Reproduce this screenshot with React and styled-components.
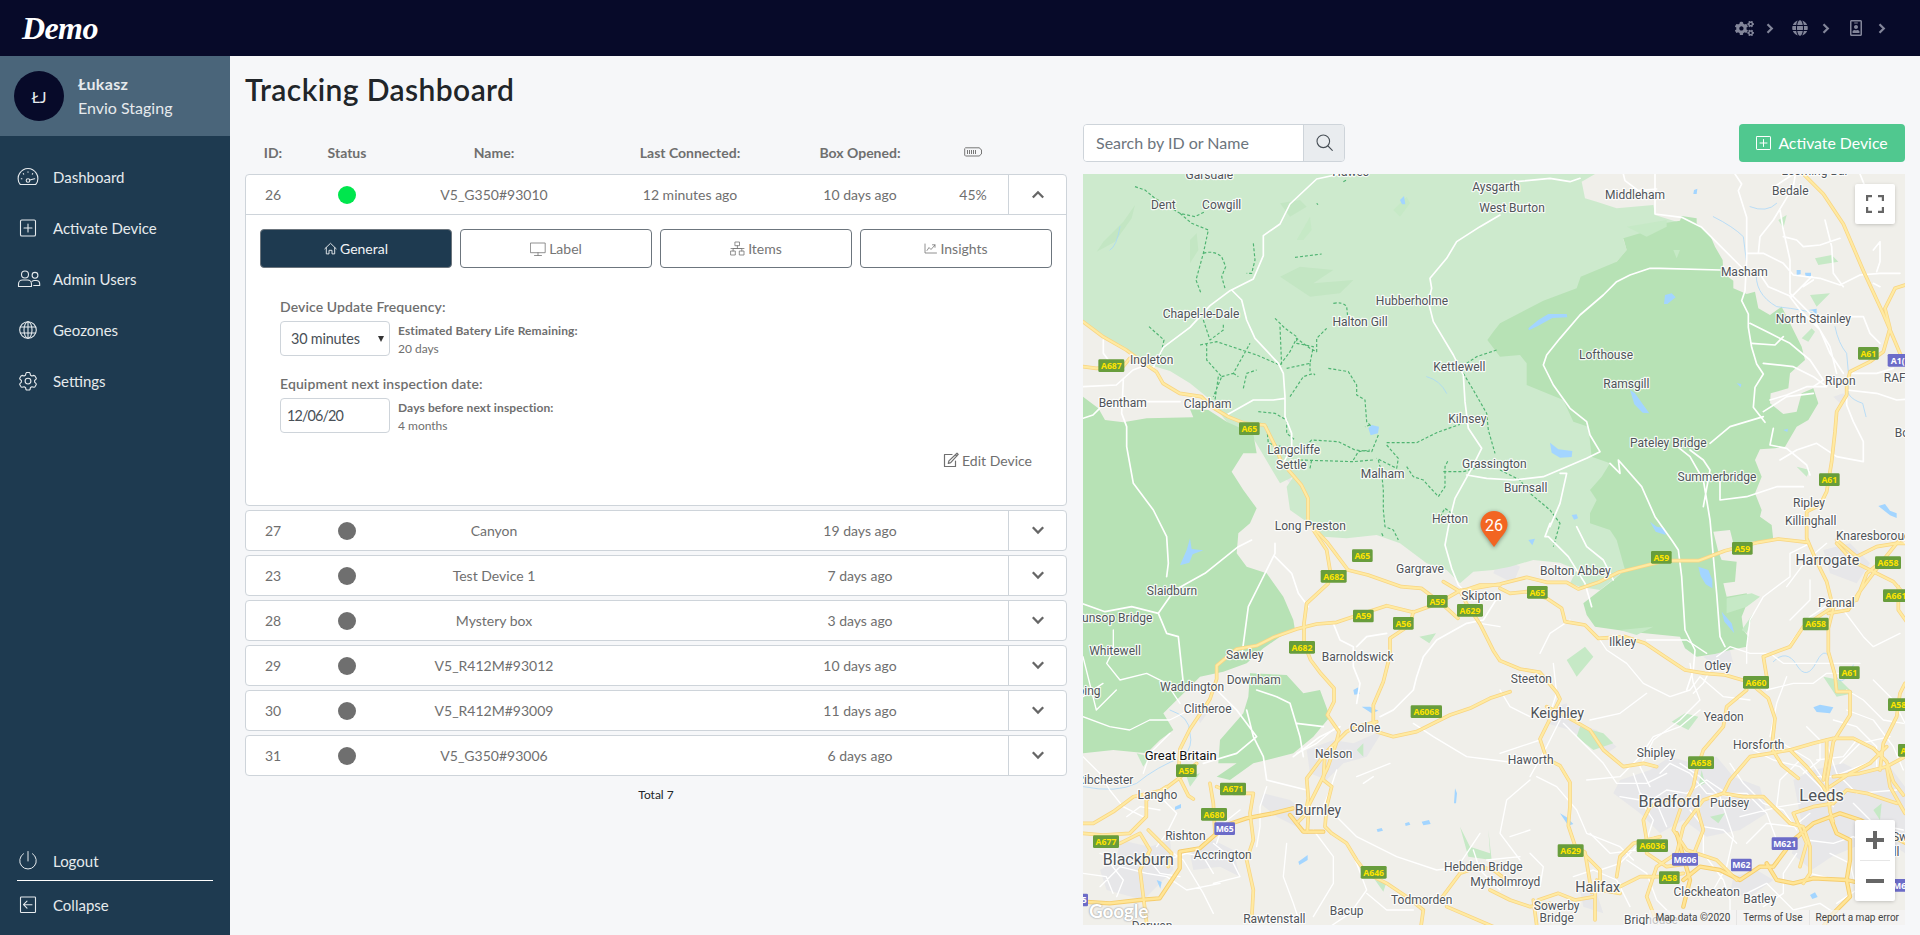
import React from "react";
import styled, { createGlobalStyle, css } from "styled-components";
import { FaCogs, FaGlobe, FaRegIdBadge } from "react-icons/fa";

const GlobalStyle = createGlobalStyle`
  *, *::before, *::after { box-sizing: border-box; }
  html, body { margin: 0; height: 100%; overflow: hidden; }
  body { font-family: Lato, "Open Sans", "Liberation Sans", sans-serif; font-size: 14px; color: #6f6f6f; background: #f6f7f9; }
  button, input, select { font-family: inherit; }
`;

const Page = styled.div`
  display: flex;
  flex-direction: column;
  width: 100%;
  height: 100vh;
`;

const TopBar = styled.header`
  display: flex;
  align-items: center;
  justify-content: space-between;
  height: 56px;
  flex: none;
  padding: 0 34px 0 22px;
  background: #070a29;
`;

const Logo = styled.div`
  font: italic 700 32px/34px "Liberation Serif", serif;
  color: #fff;
  letter-spacing: -0.6px;
`;

const TopIcons = styled.div`
  display: flex;
  align-items: center;
  color: #83869a;
  svg { display: block; }
`;

const TopIcon = styled.span`
  display: flex;
  justify-content: center;
  width: ${(p) => p.$w}px;
  margin-right: ${(p) => p.$gap}px;
`;

const Body = styled.div`
  display: flex;
  flex: 1;
  min-height: 0;
`;

const Sidebar = styled.aside`
  display: flex;
  flex-direction: column;
  width: 230px;
  flex: none;
  background: #1e3a50;
  color: #e6eaed;
`;

const UserCard = styled.div`
  display: flex;
  align-items: center;
  gap: 14px;
  height: 80px;
  padding: 0 14px;
  background: #4a657a;
`;

const Avatar = styled.div`
  display: flex;
  align-items: center;
  justify-content: center;
  width: 50px;
  height: 50px;
  border-radius: 50%;
  background: #070a29;
  font-size: 16px;
`;

const UserText = styled.div`
  font-size: 16px;
  line-height: 24px;
  strong { display: block; font-weight: 700; letter-spacing: 0.3px; }
`;

const Menu = styled.nav`
  display: flex;
  flex-direction: column;
  padding-top: 15px;
  flex: 1;
`;

const MenuItem = styled.a`
  display: flex;
  align-items: center;
  height: ${(p) => p.$h || 51}px;
  padding-left: 16px;
  font-size: 15px;
  svg { width: 24px; height: 24px; margin-right: 13px; flex: none; }
`;

const Divider = styled.hr`
  height: 1px;
  margin: 0 17px;
  border: 0;
  background: #fff;
`;

const SidebarFoot = styled.div`
  padding-bottom: 6px;
`;

const Main = styled.main`
  display: flex;
  flex-direction: column;
  flex: 1;
  padding: 0 15px 10px;
  min-width: 0;
`;

const Title = styled.h1`
  height: 68px;
  margin: 0;
  padding-top: 14px;
  font-size: 30px;
  line-height: 38px;
  font-weight: 600;
  letter-spacing: 0.4px;
  color: #212529;
`;

const Columns = styled.div`
  display: flex;
  gap: 16px;
  flex: 1;
  min-height: 0;
`;

const ListPane = styled.section`
  display: flex;
  flex-direction: column;
  width: 822px;
`;

const rowGrid = css`
  display: grid;
  grid-template-columns: 54px 94px 200px 192px 148px 74px 1fr;
  align-items: center;
  justify-items: center;
`;

const HeadRow = styled.div`
  ${rowGrid}
  height: 50px;
  padding: 6px 1px 0;
  font-weight: 700;
`;

const Card = styled.article`
  height: ${(p) => (p.$open ? 332 : 41)}px;
  margin-bottom: 4px;
  border: 1px solid #ced4da;
  border-radius: 4px;
  background: #fff;
`;

const Row = styled.div`
  ${rowGrid}
  height: ${(p) => (p.$open ? 40 : 39)}px;
  border-bottom: ${(p) => (p.$open ? "1px solid #ced4da" : "0")};
`;

const Battery = styled.span`
  display: flex;
  padding-left: 4px;
`;

const Dot = styled.span`
  width: 18px;
  height: 18px;
  border-radius: 50%;
  background: ${(p) => (p.$on ? "#00e64d" : "#6f6f6f")};
`;

const Toggle = styled.span`
  display: flex;
  align-items: center;
  justify-content: center;
  align-self: stretch;
  justify-self: stretch;
  border-left: 1px solid #ced4da;
`;

const Tabs = styled.div`
  display: grid;
  grid-template-columns: repeat(4, 192px);
  gap: 8px;
  padding: 14px 0 0 14px;
`;

const Tab = styled.button`
  display: flex;
  align-items: center;
  justify-content: center;
  gap: 3px;
  height: 39px;
  padding: 0;
  border: 1px solid #6c757d;
  border-radius: 4px;
  font-size: 14px;
  background: ${(p) => (p.$active ? "#1e3a50" : "#fff")};
  color: ${(p) => (p.$active ? "#f1f3f5" : "#757575")};
`;

const Form = styled.div`
  display: flex;
  flex-direction: column;
  padding: 27px 34px 0;
`;

const Field = styled.div`
  height: 77px;
`;

const FieldLabel = styled.div`
  height: 26px;
  line-height: 23px;
  font-weight: 600;
  letter-spacing: 0.1px;
`;

const FieldLine = styled.div`
  display: flex;
  gap: 8px;
`;

const Control = styled.div`
  display: flex;
  align-items: center;
  justify-content: space-between;
  width: 110px;
  height: 35px;
  padding: 0 5px 0 ${(p) => p.$pl}px;
  border: 1px solid #ced4da;
  border-radius: 4px;
  color: #495057;
  font-size: 14.4px;
  letter-spacing: ${(p) => p.$track || "-0.2px"};
`;

const Hint = styled.div`
  padding-top: 1px;
  font-size: 12px;
  line-height: 18px;
  strong { display: block; letter-spacing: 0.12px; }
`;

const EditLink = styled.a`
  display: flex;
  align-items: center;
  align-self: flex-end;
  gap: 3px;
  height: 20px;
  margin-top: 1px;
`;

const Total = styled.div`
  margin-top: 7px;
  text-align: center;
  font-size: 12px;
  line-height: 15px;
  color: #212529;
`;

const MapPane = styled.section`
  display: flex;
  flex-direction: column;
  width: 822px;
`;

const Tools = styled.div`
  display: flex;
  justify-content: space-between;
  height: 50px;
`;

const Search = styled.div`
  display: flex;
  width: 262px;
  height: 38px;
  border: 1px solid #ced4da;
  border-radius: 4px;
  overflow: hidden;
`;

const SearchInput = styled.input`
  flex: 1;
  min-width: 0;
  padding: 0 12px 2px;
  border: 0;
  font-size: 16px;
  &::placeholder { color: #6c757d; opacity: 1; }
`;

const SearchButton = styled.span`
  display: flex;
  align-items: center;
  justify-content: center;
  width: 41px;
  padding-bottom: 2px;
  border-left: 1px solid #ced4da;
  background: #e9ecef;
`;

const ActivateButton = styled.button`
  display: flex;
  align-items: center;
  justify-content: center;
  gap: 6px;
  width: 166px;
  height: 38px;
  padding: 0 2px 1px 0;
  border: 0;
  border-radius: 4px;
  background: #50c88f;
  color: #fff;
  font-size: 15.8px;
`;

const MapFrame = styled.div`
  position: relative;
  height: 751px;
  overflow: hidden;
  background: #f0efea;
  > svg { display: block; width: 822px; height: 751px; }
`;

const MapButton = styled.div`
  position: absolute;
  right: 10px;
  top: ${(p) => p.$top}px;
  display: flex;
  flex-direction: column;
  align-items: center;
  width: 40px;
  border-radius: 2px;
  background: #fff;
  box-shadow: 0 1px 4px -1px rgba(0, 0, 0, 0.3);
`;

const MapButtonCell = styled.span`
  display: flex;
  align-items: center;
  justify-content: center;
  width: 40px;
  height: 40px;
`;

const ZoomRule = styled.span`
  width: 30px;
  height: 1px;
  background: #e6e6e6;
`;

const Pin = styled.div`
  position: absolute;
  left: 397px;
  top: 337px;
  width: 28px;
  height: 37px;
  text-align: center;
  font: 16px/29px Roboto, sans-serif;
  color: #fff;
  svg { position: absolute; left: 0; top: 0; filter: drop-shadow(0 1px 2px rgba(0, 0, 0, 0.4)); }
  span { position: relative; }
`;

const GoogleMark = styled.div`
  position: absolute;
  left: 6px;
  bottom: 2px;
  font: 700 19px/24px Lato, sans-serif;
  letter-spacing: -0.2px;
  color: #fff;
  text-shadow: 0 0 2px #999, 0 0 1px #aaa;
`;

const Credits = styled.div`
  position: absolute;
  right: 0;
  bottom: 0;
  display: flex;
  height: 15px;
  font: 10px/15px Roboto, sans-serif;
  color: #444;
  background: rgba(245, 245, 245, 0.7);
  span { padding: 0 6px; white-space: nowrap; }
  span + span { border-left: 1px solid rgba(220, 220, 220, 0.6); }
`;

/* ---------- line icons ---------- */
const Line = ({ size = 24, w = 1.1, children, box = 24, ...rest }) => (
  <svg width={size} height={size} viewBox={`0 0 ${box} ${box}`} fill="none" stroke="currentColor" strokeWidth={w} strokeLinecap="round" strokeLinejoin="round" {...rest}>
    {children}
  </svg>
);

const GaugeIcon = () => (
  <Line>
    <path d="M4.3 19.5C1.2 16.5 1.8 11 3.6 8.400C5.500 5.500 8.500 3.500 12 3.500s6.500 2 8.400 4.900c1.800 2.600 2.400 8.100-.7 11.100z" />
    <circle cx="12" cy="15.500" r="1.800" />
    <path d="M13.800 15l4.700-1.300M12 6.700v.6M7.300 8.700l.4.400M16.700 8.700l-.4.400M5.300 13.700h.6M18.400 13.700h.3" />
  </Line>
);
const PlusBoxIcon = ({ size }) => (
  <Line size={size}>
    <rect x="4.500" y="4" width="15" height="16" rx="1.300" />
    <path d="M12 8v8M8 12h8" />
  </Line>
);
const ButtonPlusIcon = () => (
  <Line size={18} box={18} w={1}>
    <rect x="2.500" y="2.500" width="14" height="13" rx=".6" />
    <path d="M9.500 5.500v7M6 9h7" />
  </Line>
);
const UsersIcon = () => (
  <Line style={{ overflow: "visible" }}>
    <circle cx="9" cy="7.500" r="3.500" />
    <path d="M2.500 19.500v-2.500c0-2.300 1.800-4 4-4h5c2.200 0 4 1.700 4 4v2.500z" />
    <circle cx="19" cy="8.300" r="2.900" />
    <path d="M16 14.300c.6-.5 1.300-.8 2.200-.8h2c2 0 3.500 1.500 3.500 3.500v1.500h-6" />
  </Line>
);
const GlobeIcon = () => (
  <Line>
    <circle cx="12" cy="12" r="8.300" />
    <ellipse cx="12" cy="12" rx="4" ry="8.300" />
    <path d="M12 3.700v16.600M4.500 9h15M4.500 15h15" />
  </Line>
);
const GearIcon = () => (
  <Line>
    <path d="M10 4.200l.5-.7h3l.5.700.5 2 1.400.8 2-.6.900.3 1.500 2.600-.2.900-1.500 1.300v1.700l1.500 1.400.2.900-1.500 2.500-.9.300-2-.6-1.400.8-.5 2-.5.500h-3l-.5-.500-.5-2-1.400-.8-2 .6-.9-.3-1.500-2.500.2-.9 1.500-1.400v-1.700L3.900 10.200l-.2-.9 1.500-2.600.9-.3 2 .6 1.400-.8z" />
    <circle cx="12" cy="12.100" r="2.900" />
  </Line>
);
const PowerIcon = () => (
  <Line w={1}>
    <path d="M12 2.500v9.500M7.500 4.700a8.300 8.300 0 1 0 9 0" />
  </Line>
);
const CollapseIcon = () => (
  <Line>
    <rect x="4.500" y="4" width="15" height="15.500" rx=".8" />
    <path d="M16 11.700H8M11 8.200l-3.500 3.500L11 15.200" />
  </Line>
);
const HomeIcon = () => (
  <Line size={13} box={13} w={0.9}>
    <path d="M.8 6.800L6.500 1.300l5.700 5.500M2.300 5.700v6.200h2.700V8.300h3v3.600h2.700V5.700" />
  </Line>
);
const ScreenIcon = () => (
  <Line size={16} box={16} w={0.8}>
    <path d="M.8 2h14.400v9.700H.8zM8 11.700v2.800M4.500 14.500h7" />
  </Line>
);
const SitemapIcon = () => (
  <Line size={15} box={15} w={0.8}>
    <path d="M5.300 1h4.200v3.700H5.300zM1 10h4.300v4H1zM9.700 10H14v4H9.700zM7.400 4.700v2.800M3.100 10V7.500h8.700V10M1 7.500h13" />
  </Line>
);
const ChartIcon = () => (
  <Line size={13} box={13} w={0.8}>
    <path d="M1 2v9h11.500M3 8.500l2-3 2 2 4-4.500M8.500 2.800H11v2.500" />
  </Line>
);
const EditIcon = () => (
  <Line size={16} box={16} w={1.200}>
    <path d="M9 2.500H1.500v12h11V9M14 1.200l1.200 1.200-7.500 8.200-2.400.9.600-2.600zM12.500 2.800l1.300 1.300" />
  </Line>
);
const BatteryIcon = () => (
  <svg width="18" height="10" viewBox="0 0 18 10" fill="none" stroke="#777" strokeWidth="1">
    <path d="M1.500.800h14l1 1.500 1 .5v4.200l-1 .5-1 1.500h-14l-.8-.8V1.600z" />
    <path d="M3.500 3v4M5.500 3v4M7.500 3v4M9.500 3v4M11.500 3v4" />
  </svg>
);
const SearchIcon = () => (
  <Line size={17} box={17} w={1.100} color="#495057">
    <circle cx="7.300" cy="7.300" r="6.300" />
    <path d="M12 12l4.300 4.300" />
  </Line>
);
const ToggleChevron = ({ up }) => (
  <svg width="14" height="9" viewBox="0 0 14 9" fill="none" stroke="#666" strokeWidth="2.300">
    <path d={up ? "M1.800 7.500L7 2.300l5.200 5.200" : "M1.800 1.300L7 6.500l5.200-5.200"} />
  </svg>
);
const TopChevron = () => (
  <svg width="8" height="11" viewBox="0 0 8 11" fill="none" stroke="currentColor" strokeWidth="2.200">
    <path d="M1.500 1.200L5.800 5.500 1.500 9.800" />
  </svg>
);

/* ---------- map data, three units per pixel ---------- */
const PARK =
  "M9 192H1545L1505 215 1515 265 1550 275 1610 295 1720 285 1725 315 1790 335 1750 345 1680 372 1630 388 1640 420 1610 455 1520 560 1700 900 1700 1240 1630 1300 1635 1380 1560 1440 1500 1430 1470 1420 1490 1380 1440 1358 1360 1350 1290 1370 1240 1380 1180 1385 1140 1420 1100 1380 1040 1360 960 1300 890 1275 800 1285 730 1280 680 1235 630 1200 620 1130 640 1100 600 1120 520 985 440 935 380 860 330 820 270 783 210 765 150 725 75 680 9 635Z";
const DARK = [
  "M1260 640L1390 572 1490 535 1502 500 1610 455 1640 420 1630 385 1680 370 1750 340 1800 332 1805 318 1850 325 1850 340 1890 375 1905 410 1928 450 1930 490 1960 512 1960 535 2000 552 2025 545 2035 595 2070 615 2105 590 2130 640 2155 690 2165 710 2175 750 2130 790 2125 835 2072 850 2070 880 2110 912 2150 905 2165 850 2200 835 2215 880 2185 930 2150 950 2115 1010 2085 1015 2040 1018 2025 1050 2045 1100 2025 1150 2045 1200 2040 1220 2075 1245 2080 1290 1960 1300 1950 1260 1900 1265 1915 1325 1925 1350 1970 1355 1965 1415 1930 1420 1940 1460 2000 1450 2005 1470 1985 1520 1990 1560 2005 1580 2000 1610 1950 1620 1905 1632 1850 1640 1815 1615 1800 1580 1650 1565 1545 1550 1520 1515 1510 1480 1600 1410 1635 1380 1610 1290 1590 1260 1530 1240 1530 1210 1550 1170 1530 1140 1565 1100 1590 1060 1535 1040 1525 950 1480 935 1450 870 1340 825 1340 760 1320 735 1260 740 1222 690 1240 665Z",
  "M9 860L55 895 75 930 130 937 200 925 340 922 330 898 385 900 440 935 520 972 530 1030 490 1030 455 1085 490 1140 530 1195 510 1240 475 1270 470 1330 500 1370 560 1390 610 1460 640 1530 645 1560 600 1580 550 1615 500 1660 430 1685 360 1700 300 1760 250 1810 280 1860 240 1890 200 1930 100 1920 9 1930Z",
  "M510 1690L620 1695 670 1750 720 1740 750 1820 700 1880 640 1930 520 1960 450 2010 410 2000 470 1960 415 1960 420 1890 490 1810 505 1760Z",
];
const PATCHES =
  "M2190 555l60-5-40 40zM2205 445l50-10 20 20-60 10zM2165 685l30-30 10 10-20 30zM940 300l40-40 10 20-30 40zM650 390l40-70 5 40-25 30zM1780 420l20 0-10 25zM1460 1650l55-40 25 30-50 60zM1940 1465l75-15 25 10-40 30-60 20zM1018 1580l50-10-20 30zM1500 1850l70 20 30 30-60 20-50-40zM1775 1835l40-25 40 10-30 40zM830 1920l20-20 0 40zM2020 1510l-20 60-15-10zM1620 1560l100-10-50 25zM1865 1980l10 40-20 10zM1140 2150l30 60 60 20-5-70 10 90-70-10zM885 2310l35 5-10 30zM1890 2120l45-10-20 30zM2380 2100l25-20-5 50zM2230 1700l50 10 40 40-50 10zM1640 350l120-20 0 20-60 30zM2095 330l25-15-10 40zM1680 360l40-20 40 10-50 20zM170 1930l40 10-20 30zM320 2000l40-10-30 40zM2150 1070l40 10-10 20z";
const WOODS = "M70 395l60-60 35-50-10 40-50 70-55 30zM330 390l20-20 5 50-25 40zM600 500l60-30 100 10-60 40 120-10-40 40-90 10zM600 280l60-10 20 20-50 30z";
const URBAN =
  "M2140 2010l60-30 90-20 60 30 80-20 45 60v200l-60-40-90 20-70 30-60 40-60-50 30-90zM1620 2010l90-30 60-40 70 20 70-20 50 60 80 30 20 80-80 50-100 20-70-50-70 40-60-60-80-60zM1400 1800l60-20 20 60 70 20 60 50-30 20-110-70-70-20zM550 2050l80 20 50 40-30 40-60-30-50-40zM680 1920l80-30 60 10 90-40-50 80-70 20-50 50-50-20zM120 2190l90 20 60-20 10 90-90 90-110-30-20-60 50-30zM330 2230l70-40 60 30 20 80-60-30-80 10zM2230 1320l80-20 60 60-40 60-80-30zM1260 1340l60 30-20 50-60-30zM600 1000l40 60-10 60-40-40zM1500 2340l50 10 20 60-60-20zM1870 1640l80-20 10 40-50 10zM2260 860l30-10 10 15-20 15zM340 1790l50 10-30 40zM1960 2300l70-20 50 30-70 50-60-10z";
const WATER =
  "M865 955l10-10 22 5-3 20-22 6zM960 270l12-12 4 25-10 0zM1410 998l25 20 42 5-2 18-35 2-25-15zM1650 840l15 10 25 35 18 25-20-2-25-25zM1345 655l30-25 30-18 55 0 2 10-45 2-45 25-25 12zM1755 555l20-5 12 12-25 20-10 0zM320 1320l10-35 5 32 35 4-32 12-10 25-28 8zM1855 1370l30 10 12 30 0 25-20-12-15-25zM1710 1235l20 15 25 5 2 20-30-10zM1925 1505l30 35 8 30-30-35zM2200 1792l20-8 40 8-10 18-40-4zM845 1790l25 0 25 12-20 8zM820 1740l15-8 4 20-16 2zM655 2255l28-20 0 15-25 15zM975 2140l12-4 4 8-14 4zM1025 2135l22-5 5 12-22 4zM890 2158l15-4 4 8-16 4zM1125 2035l6 15-3 30-6 0zM1440 2110l20 12 20 20-15 5zM2395 1188l20-6 15 20 20 8 0 14-20-8zM2185 600l25-4 0 18-12-12zM2150 480l12 0 0 12-12 4zM2175 488l18 0 0 12-16 0zM1842 240l10-4-2 16-10 0zM1345 1290l20-4-8 20zM2190 2355l15-8 8 14-16 6zM230 2310l15 6-4 20zM285 2090l18-8 0 12-18 6zM1475 1215l15-2 4 12-12 4zM1970 820l14 2-2 10zM2110 960l14-4-2 10z";
const STREAMS =
  "M1040 800q40 10 60 50M2030 480q-10 70 60 110 90 10 110 20M2265 650q10 50 35 80l8 90q-20 40 40 60l10 40M2080 1655q40-40 70 10t60-10 50 20 60-10M1900 320q60 30 90 60l10 80M270 1800q60 20 60 70 10 40-20 70-80 30-140 80-60 30-160 10M2090 280q-30 30-80 10M120 350q-10 60-30 70";
const TRAILS = [
  "M165 230l30 10 30 25 75 45 45 10 30-15M300 310l35 30 50 20-15 70-22 80 15 40M370 430q30-10 55 10l12 30-12 30 10 35M520 400l5 50-10 40-15 0M645 442l80-10M790 215l10-5M710 280l4 4",
  "M207 650l45 40-10 45-18 30M370 630l20 60 40-30 0-20M360 705l50-10 120 40 70 30 30-40 20-40 40 30 20 10 0-40 30-30M380 700l0 50 45 50-25 60M425 800l35-10 50-90M460 790l15 10M490 835l10-45 30-10M585 625l30 30 35 25 0 20 50 10-10 50-70 15M600 650l5 120M630 860l40-60 30-10 5 5M690 760l0 30M415 800l-10 70",
  "M760 580q30-5 40 10l3 30M745 775l30 5 30 5 25 40 0 30 25 15 5 65 15 15M920 998l90 0 60-30 70-25M870 945l-15 5M895 975l-20 50-50-5-50-25-80-5-20 20M660 1050l160 5 60-5M820 1050l15-25 35-5M895 1050l10 40 5 50 0 60 5 50 25 10 15 30M920 1005l35 40-5 30-60-30M980 1070l20 30 30 10 45 50 20-30 0-60 10-20M1090 1085l60 0 70-20M1150 790l30 50 40 70 5 50 20 70M1160 760l30-20 60-20M535 905l50 5 35 20 0 40 25 20M540 940l20 10 5 50 40 10M690 1075l5-25",
  "M1260 1080l60 30 30 40 60 50 30 40-20 70M1080 1220l15-25 20 15M905 1270l5 10",
];
const MINOR = [
  "M780 192l-70 15-80 75-30 60-50 35 0 60-30 70-70 35-60 45-60 65-80 60-30 60-20 0",
  "M455 540l30 30 15 60 25 55 70 75 15 30 5 70 0 60 20 50 0 40-20 40-20 20M440 915l80-45 60 0 35-5M9 830l100-5 50-45 40-15M130 810l-5 100 15 40 0 60 20 110 60 80 40 80 5 80-5 40",
  "M280 1445l-45 65 25 60 35 10 15 140M235 1510l-80-20-80 15-70-25M285 1440l90-50 100-80 40-20M585 1300l0 30-40 80-40 80-20 150M585 1340l50 50 20 60 30 40M300 875l-100 0M70 690l0 40 15 20M9 925l30-10 20-20",
  "M1260 315l-60 35-70 45-30 50-50 60 5 30-10 40 15 60 60 100 30 60 5 80 10 80 40 60-30 60-50 90-15 60-15 80 20 70 20 50 20 20",
  "M1500 205l-30 10-60-10-100 10M1630 192l5 20 40 30 55-5M2340 192l20 50M1725 192l0 60 0 60 80 10 60 30 60 60 80 80M1965 192l20 30-10 20 25 80 0 130-5 90-10 30 20 40 0 40 10 60 15 50 20 30-25 40-5 60 35 45M2000 430l50 0 60 30 30 35 80 10 60 20 60-30 60-5 60 0M2035 430l5-50 40-50 30-50 30-50 10-60M2100 300l10 60 20 90 0 100 60 60 60 100 20 80M2110 380l40 10 20 20 50-5 60-20M2140 192l-60 40M2290 530l-30-40-5-80-20-80M2170 530l30-20M2045 500l20 30 70 30 60-60M2130 560l30 40 60 60 30 70 40 60M2010 640l60 30 60 30 60 50 40 60-30 20",
  "M2015 700l70 5 25-25M2050 760l90 10 60 30 40 30-60 0-60 25-50 15M2050 905l70-45 80-10M2080 955l-10 50 50 10 60 50 10 30M2100 1050l50-30 60-20 60 40 80 15 0-60-30-60-20-50 0-60M2300 840l90 10 60 20 60-5M2310 790l80 0 50-15M2310 620l40 0 20 50 30 30M2380 520l20 10M2380 420l20-25 0 60-10 30",
  "M1740 475l-30 0-60 20-40 20-40 40-70 60-60 70-40 50-10 30 30 60 50 70 50 40 10 40 30 50-40 20-70 30-60 25-90 10-80-5-60-10M1740 475l180 5M1590 1060l30 30-5-40 70 80 40 90 50 70 20 30 10 80 10 160 30 60-5 60-20 60M1780 1000l50 40 40 70 10 60 10 60 10 110 10 110 10 130 15 30M1890 1000l60-50 100-30M1830 1020l40 30 20 30-20 110M1920 1100l0 70 80-10 90-30 80 0",
  "M1490 1250l30 60 50 40 30 60M1410 1240l-15 40 10 0 60 60 50 80 20 70M1440 1090l20 0-20 90-30 70M1260 1450l-50 80-50 10-90 50-40 50-20 60-10 40-60 60-40 20M760 1540l20 50 40 20 0 60 20 50-10 60M830 1610l30-30 60-10M500 1800l20 80 30 60 10 70 120 30M640 1940l80-60 60-30M530 1740l60 20 40 20 30 100 10 60M650 1840l80 10M410 1740l60 60 60 80-60 50-100 30",
  "M1000 1840l60 40 100 60 80 10 80 10M1260 1550l-60-10M9 1820l80 30 60 10 60-30 60 0 60-30M100 1560l0 60-20 40 40 50 80-20 60 30 40 60M9 1640l40 160 60-60M9 1760l60-40M9 1940l50 50 30 50 40 50 60 30M190 1990l20-60 60-60M880 2000l-30 20M930 1960l-100 40M770 1980l-20 60-20 50M650 1930l60-30 60-50M480 2100l-50 40-20 60M700 2160l60 80 0 80-60 100M620 2200l-10 100 30 80 20 60M560 2030l-20 60 0 60-10 60M770 2120l60 60 120 60 120 40 80-10 60-10M800 2200l30 60 30 80-50 70-60 40M250 2210l60 40 60 100 30 60M260 2250l60-20 50 10 30 50M60 2330l60-60 80 20 60 10 60 40 100-20M60 2230l60 20 60-10M9 2290l70 10 20 50M400 2200l50 40 30 60-80 20M230 2050l60 60-30 60-30 40",
  "M1180 2220l20 60 60 60M1200 2170l-60 90M1220 2250l100-10M860 2350l60 50 80 0M1260 1740l30 50 60 30M1260 1930l60-20 60-20M1450 1840l60 60 60 60 40 60 90 0 60-30M1370 2000l60 30 60 70 30 70 100 40 40 40M1350 2010l-70 60-20 100 60 80M1440 1830l-40 80-50 90M1520 2010l100-10 60-60 40-60 80-30 60-50M1420 1660l10 90-20 60M1380 1630l30-60 60-40",
  "M1560 1590l20 30 60 40 50 60 80 40 60-20 30-40 70 60 80 10M1700 1750l-80 60-90 20M1830 1660l10 60 20 50-60 60-80 60-40 80 30 60M1900 1660l-30 60-30 30M1700 1590l120 0 60 40M1910 1640l40-30 60 20 60 0 40 30 120 0 110 0M2000 1660l0-50 10-80 40-70 80-60 0-70 60-30M2130 1600l60-80 60-40 40 20 60 80 30 30 80-40M2190 1410l0 60-60 60M2240 1300l-60 50-60 80M2060 1740l80-20 60 0 40-30 60 0M2120 1700l-30 80-20 100M2300 1740l50 30 60 60 60 10",
  "M1700 2080l60-40 60 10 60-40 60 40 60 0 60 60 30 80M1800 1960l60 40 60 60 40 120-20 90-40 70M1950 1960l40 60 60 60 60 20 40 60M2020 1920l60 30 80 20 60 60 40 60M2090 1890l100 60 60 90 0 80M2000 2200l60-60 80 10 50-40M1870 2170l0 60 60 80 20 60 0 60M1640 2250l60 40 30 80 60 60M1530 2170l60 60 80-10 50-40M2180 2190l80 10 60-20 60 30 60-10M2300 1800l80 30 60 80 30 70M2380 1710l60 60 40 80M2240 1900l30 90 60 60 120-10M2280 1960l60-60 90-20M2320 2080l60 60 90 20M1480 2300l60-20 70 30 40 80M2000 2350l60-30 80 80 80-20 60 40M1680 2200l-60 60-60 20M1980 2120l120-30 60-10M2160 1950l-60 60-10 80M2200 2000l60 0 100-40",
  "M1660 1990l20 60 50 30 30 70M1740 1990l30-30 60 30 50 60 80 10M1620 2060l60 10 40 60-20 60M1830 2100l40 50 60 10 40 40M2180 1850l40 40 0 60-50 40M2260 1830l70 20 60 60 0 60M2330 1890l-40 50-80 10M2150 2230l-40 60 0 60-60 40M2250 2230l60 30 20 80-60 40M2190 2290l80 20M1350 2230l40 40-10 60M1290 2180l60-20M140 2120l40-30 60 10M90 2260l40 50-20 50M200 2240l40 50 60 10",
];
const MAJOR = [
  "M9 635l60 45 70 40 60 45 30 20 20 35 50 30 65 10 30 30 50 30 50 20 60 5 30 60 20 50 60 70 20 40 0 70 60 65 60 80 60 15 100 35 60 5 60 45 50 45",
  "M9 770l40 5 80-5 20-25 30 10M700 1260l40 60 10 60-5 40-65 60-8 60 0 60 20 50 30 40 40 45 0 40-20 40 35 50-10 40-25 70-30 60-25 50-5 80",
  "M1140 1442l120-20 80-20 60 15 60 0 35 20 60-20 60-30 80-20 60-15 100 0 80-30 100-25 60-10 90 10M1140 1442l-70 40-70 25-80-20-60 20-90 30-60 5-60 15-70 25-50 25-60 10-60 50 0 40-20 60-60 90-30 60-5 80 30 60 15 10M350 1960l-60 50-40 30-90 20-60 45-60 35-35 0M1260 1425l-60 0-60 20-50-30",
  "M1140 1442l20 40 40 60 40 80 20 30 60 25 60 10 50 60 10 20-30 60-30 60 20 60 40 20 30 50 0 70-5 60 20 60 30 20 10 60 10 60M1400 1790l60 30 70 40 40 60 60 50 60-10 40 10",
  "M1000 1505l-10 40-60 40 0 50-20 80-30 70 0 50 10 30 50 15 70-15 100-50 60-20 60-30 60-20M890 1835l-60 15-30 15-60 60-60 80 5 60-10 50-20 20M735 1930l-5 80 25 20-15 60-5 60 20 20 45 30 30 50 30 40 60 30 60 40 50 40-10 70M1080 2370l60-80 60-20 40 10 40 30",
  "M1260 1435l30 15 50-5 60 20 45 30 10 40 60 10 40 40 80-5 60 20 60 40 60 40 60 10 60 5 70 20 60 50 20 60-10 90 30 50 50 40M2130 1920l70-20 60-15 60 0 60 30 40 40 20 60 30 40",
  "M2000 1740l-60 50-10 60-60 70-20 60-10 50-20 40-60 0-50 20-20 40 10 60 0 40 60 40 70-10 40-100-20-70M2060 1700l-10-60 80-30 40-60 60-40 30-20 70-20 30-80 50-40 40-50 30-30 40-60M2245 1510l60-10 30-50 60-80",
  "M2170 192l60 60 60 90 60 140 60 130 55 130M2475 525l-30 10-15 30-15 30 15 60-20 70-40 30-60 30-10 40 0 30-30 50-5 60-10 90-15 90-20 40-40 20 0 80 30 70 30 60 20 80-15 60 0 70 20 70 5 50 40 0 0 70-50 80-10 60-10 60 10 90 10 30M2270 1290l60 50 60-30 60-10 25 0M2270 1300l50 55 60 30 60 30 35 40M2455 1430l0 70 25 35",
  "M2130 1920l-60 10-60 10-60 70-20 40-60 20-60 80-20 80-60 40-30 90 20 50 20 80M1930 2050l60 10 60 0 80 80 40 10 20 60 0 80-20 30",
  "M9 2170l60 5 80-5 50-50 0-50 60-40M120 2200l60-30 30 50-30 60 10 80 10 80M390 2020l10 60 5 90M410 2030l50 20 60 0-10 60 10 80-20 60 20 90-5 90M205 2160l40 40 30 30-10 40M1620 2330l60-30 60 0 70-10M1550 2310l-5 50-60 10-50-20-60 20M1500 2220l60 60 0 60 60 10M1545 2340l0 90M1610 2300l10-60 40-40 80-20",
  "M2260 2080l40-40 60 10 60 20 30 10M2260 2080l-60 10-60 20 40 90-20 70M2250 2030l60-40 60-30 50-50M2475 1720l-15 30-10 70-40 80-10 80M2260 2000l80-10 80-20 55-30M1360 2370l10 75M1230 2340l60 30 60 20 60-10",
  "M2130 1920l50 50 50 60 20 40M2230 2010l10-60 0-60M2420 1970l10 60 45 80M1800 2100l-20 60 40 60 90 30 60 60M1240 2450l-140-60",
];
const MOTORWAY = [
  "M9 2375l80 5 90-10 60-5 60-90 0-50 60-10 80-70 60-20 80-15 60-15",
  "M630 2115l40 50 60 0M1790 2170l40 140-20 80M1810 2310l50-40 60 10 60 30 60-40 40 0 60-80 60-50 80-30 60 20 60 30 80 40M2060 2260l30 50 50 10 60-15 100 5 90 20M2250 2120l20 50 40 20 0 60-10 60 10 50-60 60-20 30",
];
const LABELS = [
  [388, 207, "Garsdale"], [812, 198, "Hawes"], [250, 297, "Dent"], [425, 297, "Cowgill"], [1248, 244, "Aysgarth"], [1296, 306, "West Burton"],
  [1665, 267, "Middleham"], [2131, 255, "Bedale"], [2205, 195, "Leeming Bar"], [363, 624, "Chapel-le-Dale"], [996, 585, "Hubberholme"], [840, 648, "Halton Gill"],
  [1993, 498, "Masham"], [2200, 639, "North Stainley"], [215, 762, "Ingleton"], [1138, 783, "Kettlewell"], [1578, 747, "Lofthouse"], [1639, 835, "Ramsgill"],
  [2281, 825, "Ripon"], [2444, 816, "RAF", 36], [128, 892, "Bentham"], [383, 894, "Clapham"], [1162, 940, "Kilnsey"], [1765, 1011, "Pateley Bridge"],
  [2466, 981, "Bo"], [641, 1032, "Langcliffe"], [634, 1077, "Settle"], [908, 1104, "Malham"], [1243, 1074, "Grassington"], [1911, 1113, "Summerbridge"],
  [1337, 1146, "Burnsall"], [2187, 1192, "Ripley"], [2192, 1245, "Killinghall"], [691, 1260, "Long Preston"], [1110, 1239, "Hetton"], [2390, 1290, "Knaresborough"],
  [2242, 1365, "Harrogate", 43], [1020, 1390, "Gargrave"], [1486, 1395, "Bolton Abbey"], [276, 1455, "Slaidburn"], [1204, 1470, "Skipton"], [2269, 1491, "Pannal"],
  [100, 1537, "Dunsop Bridge"], [105, 1635, "Whitewell"], [494, 1648, "Sawley"], [833, 1653, "Barnoldswick"], [1628, 1608, "Ilkley"], [1913, 1680, "Otley"],
  [521, 1722, "Downham"], [336, 1744, "Waddington"], [-9, 1756, "Chipping"], [1354, 1719, "Steeton"], [383, 1810, "Clitheroe"], [1432, 1824, "Keighley", 43],
  [1931, 1833, "Yeadon"], [855, 1867, "Colne"], [302, 1950, "Great Britain", 39, "#111"], [761, 1945, "Nelson"], [1728, 1941, "Shipley"], [2036, 1918, "Horsforth"],
  [1352, 1963, "Haworth"], [75, 2023, "Ribchester"], [232, 2068, "Langho"], [714, 2115, "Burnley", 42], [1768, 2092, "Bradford", 48], [1949, 2090, "Pudsey"],
  [2225, 2074, "Leeds", 50], [316, 2191, "Rishton"], [175, 2266, "Blackburn", 48], [428, 2246, "Accrington"], [1210, 2284, "Hebden Bridge"], [1276, 2329, "Mytholmroyd"],
  [1553, 2346, "Halifax", 43], [1880, 2359, "Cleckheaton"], [2039, 2380, "Batley"], [1025, 2383, "Todmorden"], [800, 2416, "Bacup"], [583, 2440, "Rawtenstall"],
  [1430, 2401, "Sowerby"], [1430, 2437, "Bridge"], [1713, 2443, "Brighouse"], [216, 2460, "Darwen"], [2460, 2192, "Sw"], [2432, 2237, "Hill"],
];
const SHIELDS = [
  [94, 767, "A687"], [508, 956, "A65"], [2365, 730, "A61"], [2470, 751, "A1(M)", 1], [2248, 1109, "A61"], [847, 1337, "A65"], [761, 1399, "A682"],
  [850, 1518, "A59"], [1072, 1474, "A59"], [1170, 1501, "A629"], [970, 1540, "A56"], [666, 1612, "A682"], [1372, 1447, "A65"], [1744, 1342, "A59"],
  [1987, 1315, "A59"], [2424, 1358, "A658"], [2448, 1457, "A661"], [2207, 1542, "A658"], [2308, 1688, "A61"], [2028, 1717, "A660"], [1039, 1805, "A6068"],
  [2455, 1784, "A58"], [1863, 1958, "A658"], [2485, 1921, "A64"], [319, 1982, "A59"], [459, 2037, "A671"], [402, 2113, "A680"], [434, 2156, "M65", 1],
  [78, 2195, "A677"], [881, 2287, "A646"], [1472, 2222, "A629"], [1717, 2207, "A6036"], [1815, 2248, "M606", 1], [1984, 2265, "M62", 1], [2114, 2201, "M621", 1],
  [1768, 2303, "A58"], [-7, 2370, "M65", 1], [2466, 2326, "M62", 1],
];

const RoadMap = () => (
  <svg viewBox="9 192 2466 2253" fill="none" strokeLinejoin="round" strokeLinecap="round">
    <rect x="9" y="192" width="2466" height="2253" fill="#f0efea" />
    <path d={URBAN} fill="#e7e7e9" />
    <path d={PARK} fill="#cdeacd" />
    {DARK.map((d, i) => <path key={i} d={d} fill="#b7e2b5" />)}
    <path d={WOODS} fill="#c3e6c3" />
    <path d={PATCHES} fill="#c6e9c6" />
    <path d={STREAMS} stroke="#a5d6fb" strokeWidth="2.200" />
    <path d={WATER} fill="#a3d5ff" />
    {TRAILS.map((d, i) => <path key={i} d={d} stroke="#4fb472" strokeWidth="3.500" strokeDasharray="9 6" strokeLinecap="butt" />)}
    {MINOR.map((d, i) => <path key={i} d={d} stroke="#fff" strokeWidth={i > 7 ? 4 : 5} />)}
    {MAJOR.map((d, i) => <path key={i} d={d} stroke="#f8d583" strokeWidth="11" />)}
    {MOTORWAY.map((d, i) => <path key={i} d={d} stroke="#f6cd6d" strokeWidth="13" />)}
    {MAJOR.map((d, i) => <path key={i} d={d} stroke="#ffeaa2" strokeWidth="6.500" />)}
    {MOTORWAY.map((d, i) => <path key={i} d={d} stroke="#ffe596" strokeWidth="7.500" />)}
    {LABELS.map(([x, y, text, size = 36, fill = "#505459"]) => (
      <text key={text + x} x={x} y={y} textAnchor="middle" fontFamily="Roboto, sans-serif" fontSize={size} fill={fill} stroke="#fff" strokeWidth="7" strokeOpacity=".85" style={{ paintOrder: "stroke" }}>
        {text}
      </text>
    ))}
    {SHIELDS.map(([x, y, text, blue]) => {
      const w = 14 + text.length * 16;
      return (
        <g key={text + x + y}>
          <rect x={x - w / 2} y={y - 19} width={w} height="38" rx="4" fill={blue ? "#6c6cc8" : "#689d3c"} />
          <text x={x} y={y + 10} textAnchor="middle" fontFamily="Open Sans, sans-serif" fontWeight="700" fontSize="26" fill={blue ? "#fff" : "#ffe400"}>{text}</text>
        </g>
      );
    })}
  </svg>
);

const MENU = [["Dashboard", GaugeIcon], ["Activate Device", PlusBoxIcon], ["Admin Users", UsersIcon], ["Geozones", GlobeIcon], ["Settings", GearIcon]];
const TABS = [["General", HomeIcon], ["Label", ScreenIcon], ["Items", SitemapIcon], ["Insights", ChartIcon]];
const DEVICES = [
  ["27", "Canyon", "19 days ago"],
  ["23", "Test Device 1", "7 days ago"],
  ["28", "Mystery box", "3 days ago"],
  ["29", "V5_R412M#93012", "10 days ago"],
  ["30", "V5_R412M#93009", "11 days ago"],
  ["31", "V5_G350#93006", "6 days ago"],
];

export default function App() {
  return (
    <Page>
      <GlobalStyle />
      <TopBar>
        <Logo>Demo</Logo>
        <TopIcons>
          <TopIcon $w={20} $gap={12}><FaCogs size={19} /></TopIcon>
          <TopIcon $w={8} $gap={18}><TopChevron /></TopIcon>
          <TopIcon $w={16} $gap={14}><FaGlobe size={16} /></TopIcon>
          <TopIcon $w={8} $gap={20}><TopChevron /></TopIcon>
          <TopIcon $w={12} $gap={16}><FaRegIdBadge size={16} /></TopIcon>
          <TopIcon $w={8} $gap={0}><TopChevron /></TopIcon>
        </TopIcons>
      </TopBar>
      <Body>
        <Sidebar>
          <UserCard>
            <Avatar>ŁJ</Avatar>
            <UserText><strong>Łukasz</strong>Envio Staging</UserText>
          </UserCard>
          <Menu>
            {MENU.map(([label, Icon]) => <MenuItem key={label}><Icon />{label}</MenuItem>)}
          </Menu>
          <SidebarFoot>
            <MenuItem $h={39}><PowerIcon />Logout</MenuItem>
            <Divider />
            <MenuItem $h={48}><CollapseIcon />Collapse</MenuItem>
          </SidebarFoot>
        </Sidebar>
        <Main>
          <Title>Tracking Dashboard</Title>
          <Columns>
            <ListPane>
              <HeadRow>
                <span>ID:</span><span>Status</span><span>Name:</span><span>Last Connected:</span><span>Box Opened:</span>
                <Battery><BatteryIcon /></Battery>
              </HeadRow>
              <Card $open>
                <Row $open>
                  <span>26</span><Dot $on /><span>V5_G350#93010</span><span>12 minutes ago</span><span>10 days ago</span>
                  <Battery>45%</Battery>
                  <Toggle><ToggleChevron up /></Toggle>
                </Row>
                <Tabs>
                  {TABS.map(([label, Icon], i) => <Tab key={label} $active={i === 0}><Icon />{label}</Tab>)}
                </Tabs>
                <Form>
                  <Field>
                    <FieldLabel>Device Update Frequency:</FieldLabel>
                    <FieldLine>
                      <Control $pl={10}>
                        30 minutes
                        <svg width="6" height="6" viewBox="0 0 6 6"><path d="M0 0h6L3 6z" fill="#333" /></svg>
                      </Control>
                      <Hint><strong>Estimated Batery Life Remaining:</strong>20 days</Hint>
                    </FieldLine>
                  </Field>
                  <Field>
                    <FieldLabel>Equipment next inspection date:</FieldLabel>
                    <FieldLine>
                      <Control $pl={6} $track="-0.9px">12/06/20</Control>
                      <Hint><strong>Days before next inspection:</strong>4 months</Hint>
                    </FieldLine>
                  </Field>
                  <EditLink><EditIcon />Edit Device</EditLink>
                </Form>
              </Card>
              {DEVICES.map(([id, name, opened]) => (
                <Card key={id}>
                  <Row>
                    <span>{id}</span><Dot /><span>{name}</span><span /><span>{opened}</span><span />
                    <Toggle><ToggleChevron /></Toggle>
                  </Row>
                </Card>
              ))}
              <Total>Total 7</Total>
            </ListPane>
            <MapPane>
              <Tools>
                <Search>
                  <SearchInput placeholder="Search by ID or Name" />
                  <SearchButton><SearchIcon /></SearchButton>
                </Search>
                <ActivateButton><ButtonPlusIcon />Activate Device</ActivateButton>
              </Tools>
              <MapFrame>
                <RoadMap />
                <Pin>
                  <svg width="28" height="37" viewBox="0 0 28 37">
                    <path d="M14 0a13.500 13.500 0 0 1 13.500 13.500c0 7-6.500 12-10.500 18.500L14 36l-3-4C7 25.500.5 20.500.5 13.500A13.500 13.500 0 0 1 14 0z" fill="#f26522" />
                  </svg>
                  <span>26</span>
                </Pin>
                <MapButton $top={10}>
                  <MapButtonCell>
                    <svg width="18" height="18" viewBox="0 0 18 18" fill="none" stroke="#666" strokeWidth="2.200">
                      <path d="M1.100 6V1.100H6M12 1.100h4.900V6M16.900 12v4.900H12M6 16.900H1.100V12" />
                    </svg>
                  </MapButtonCell>
                </MapButton>
                <MapButton $top={646}>
                  <MapButtonCell>
                    <svg width="18" height="18" viewBox="0 0 18 18" stroke="#666" strokeWidth="4"><path d="M9 0v18M0 9h18" /></svg>
                  </MapButtonCell>
                  <ZoomRule />
                  <MapButtonCell>
                    <svg width="18" height="18" viewBox="0 0 18 18" stroke="#666" strokeWidth="4"><path d="M0 9h18" /></svg>
                  </MapButtonCell>
                </MapButton>
                <GoogleMark>Google</GoogleMark>
                <Credits><span>Map data ©2020</span><span>Terms of Use</span><span>Report a map error</span></Credits>
              </MapFrame>
            </MapPane>
          </Columns>
        </Main>
      </Body>
    </Page>
  );
}
